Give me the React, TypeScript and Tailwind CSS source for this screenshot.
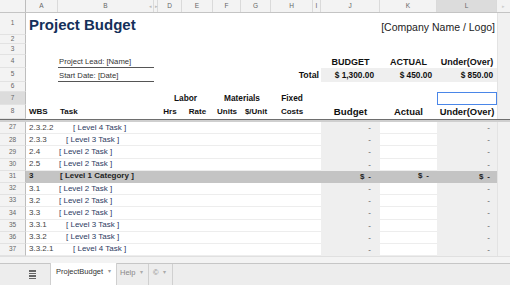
import React from 'react';

const GRID = 'grid grid-cols-[26px_32px_96px_4px_24px_31px_28px_30px_42px_8px_59px_57px_60px_13px]';

function Num({ n, sel }: { n: number; sel?: boolean }) {
  return (
    <div
      className={`flex items-center justify-center border-r border-b border-r-[#bdbdbd] border-b-[#e2e2e2] text-[6.5px] text-[#666] ${
        sel ? 'bg-[#dcdcdc]' : 'bg-[#f3f3f3]'
      }`}
    >
      {n}
    </div>
  );
}

function Strip() {
  return <div className="bg-[#f1f1f1] border-l border-[#e3e3e3]" />;
}

const dataRows = [
  { n: 27, wbs: '2.3.2.2', task: '[ Level 4 Task ]', lvl: 4 },
  { n: 28, wbs: '2.3.3', task: '[ Level 3 Task ]', lvl: 3 },
  { n: 29, wbs: '2.4', task: '[ Level 2 Task ]', lvl: 2 },
  { n: 30, wbs: '2.5', task: '[ Level 2 Task ]', lvl: 2 },
  { n: 31, wbs: '3', task: '[ Level 1 Category ]', lvl: 1 },
  { n: 32, wbs: '3.1', task: '[ Level 2 Task ]', lvl: 2 },
  { n: 33, wbs: '3.2', task: '[ Level 2 Task ]', lvl: 2 },
  { n: 34, wbs: '3.3', task: '[ Level 2 Task ]', lvl: 2 },
  { n: 35, wbs: '3.3.1', task: '[ Level 3 Task ]', lvl: 3 },
  { n: 36, wbs: '3.3.2', task: '[ Level 3 Task ]', lvl: 3 },
  { n: 37, wbs: '3.3.2.1', task: '[ Level 4 Task ]', lvl: 4 },
];

const indent: Record<number, string> = {
  1: 'pl-[2px]',
  2: 'pl-[1px]',
  3: 'pl-[8px]',
  4: 'pl-[15px]',
};

export default function App() {
  const letters = ['A', 'B', '', 'D', 'E', 'F', 'G', 'H', 'I', 'J', 'K', 'L'];

  return (
    <div className="w-[510px] h-[285px] overflow-hidden bg-white font-['Liberation_Sans',Arial,sans-serif] text-[8px] text-[#333] leading-none">
      {/* Column letters */}
      <div className={`${GRID} h-[13px] bg-[#f3f3f3] border-b border-[#c4c4c4] text-[6.5px] text-[#666]`}>
        <div className="border-r border-[#bdbdbd]" />
        {letters.map((l, i) => (
          <div
            key={i}
            className={`relative flex items-center justify-center border-r border-[#dadada] ${
              l === 'L' ? 'bg-[#dcdcdc]' : ''
            }`}
          >
            {l}
            {l === 'B' && <span className="absolute right-[1px] text-[5px] text-[#bbb]">◂</span>}
            {l === 'D' && <span className="absolute left-[-3px] text-[5px] text-[#bbb]">▸</span>}
          </div>
        ))}
        <div className="flex items-center justify-center text-[5px] text-[#ccc]">▸</div>
      </div>

      {/* Row 1 */}
      <div className={`${GRID} h-[22px]`}>
        <Num n={1} />
        <div className="col-span-9 flex items-center pl-[3px] text-[15px] font-bold text-[#15305a] whitespace-nowrap">
          Project Budget
        </div>
        <div className="col-span-3 flex items-end justify-end pr-[2px] pb-[3px] text-[10.5px] text-[#222] whitespace-nowrap">
          [Company Name / Logo]
        </div>
        <Strip />
      </div>

      {/* Row 2, 3 */}
      <div className={`${GRID} h-[9px]`}>
        <Num n={2} />
        <div className="col-span-12" />
        <Strip />
      </div>
      <div className={`${GRID} h-[11px]`}>
        <Num n={3} />
        <div className="col-span-12" />
        <Strip />
      </div>

      {/* Row 4 */}
      <div className={`${GRID} h-[13px]`}>
        <Num n={4} />
        <div />
        <div className="flex items-end pl-[1px] pb-[1px] border-b border-[#555] whitespace-nowrap text-[7.7px]">
          Project Lead: [Name]
        </div>
        <div className="col-span-7" />
        <div className="flex items-end justify-center pb-[1px] text-[9px] font-bold text-[#111]">BUDGET</div>
        <div className="flex items-end justify-center pb-[1px] text-[9px] font-bold text-[#111]">ACTUAL</div>
        <div className="flex items-end justify-center pb-[1px] text-[9px] font-bold text-[#111] whitespace-nowrap">
          Under(Over)
        </div>
        <Strip />
      </div>

      {/* Row 5 */}
      <div className={`${GRID} h-[14px]`}>
        <Num n={5} />
        <div />
        <div className="flex items-end pl-[1px] pb-[1px] border-b border-[#555] whitespace-nowrap text-[7.7px]">
          Start Date: [Date]
        </div>
        <div className="col-span-5" />
        <div className="col-span-2 flex items-center justify-end pr-[2px] text-[8.8px] font-bold text-[#111]">Total</div>
        <div className="flex items-center justify-end pr-[6px] bg-[#efefef] text-[8.3px] font-bold text-[#111] whitespace-nowrap">
          $ 1,300.00
        </div>
        <div className="flex items-center justify-end pr-[5px] bg-[#efefef] text-[8.3px] font-bold text-[#111] whitespace-nowrap">
          $ 450.00
        </div>
        <div className="flex items-center justify-end pr-[4px] bg-[#efefef] text-[8.3px] font-bold text-[#111] whitespace-nowrap">
          $ 850.00
        </div>
        <Strip />
      </div>

      {/* Row 6 */}
      <div className={`${GRID} h-[10px]`}>
        <Num n={6} />
        <div className="col-span-12" />
        <Strip />
      </div>

      {/* Row 7 */}
      <div className={`${GRID} h-[13px]`}>
        <Num n={7} sel />
        <div className="col-span-3" />
        <div className="col-span-2 flex items-center justify-center font-bold text-[8.3px] text-[#111]">Labor</div>
        <div className="col-span-2 flex items-center justify-center font-bold text-[8.3px] text-[#111]">Materials</div>
        <div className="flex items-center justify-center font-bold text-[8.3px] text-[#111]">Fixed</div>
        <div className="col-span-3" />
        <div className="border border-[#4a86e8]" />
        <Strip />
      </div>

      {/* Row 8 */}
      <div className={`${GRID} h-[14px] text-[#111]`}>
        <Num n={8} />
        <div className="flex items-center pl-[3px] font-bold">WBS</div>
        <div className="flex items-center pl-[2px] font-bold">Task</div>
        <div />
        <div className="flex items-center justify-center font-bold">Hrs</div>
        <div className="flex items-center justify-center font-bold">Rate</div>
        <div className="flex items-center justify-center font-bold">Units</div>
        <div className="flex items-center justify-center font-bold whitespace-nowrap">$/Unit</div>
        <div className="flex items-center justify-center font-bold">Costs</div>
        <div />
        <div className="flex items-center justify-center font-bold text-[9.7px]">Budget</div>
        <div className="flex items-center justify-center font-bold text-[9.5px]">Actual</div>
        <div className="flex items-center justify-center font-bold text-[9.4px] whitespace-nowrap">Under(Over)</div>
        <Strip />
      </div>

      {/* Frozen divider */}
      <div className="h-[3px] border-t border-[#6e6e6e] bg-[#cfcfcf]" />

      {/* Data rows */}
      {dataRows.map((r) => {
        const cat = r.lvl === 1;
        return (
          <div key={r.n} className={`${GRID} h-[12.2px]`}>
            <Num n={r.n} />
            <div
              className={`flex items-center pl-[3px] border-b ${
                cat ? 'bg-[#c4c4c4] border-[#c4c4c4] font-bold text-[#222]' : 'border-[#ededed] text-[#444]'
              }`}
            >
              {r.wbs}
            </div>
            <div
              className={`flex items-center whitespace-nowrap border-b ${indent[r.lvl]} ${
                cat ? 'bg-[#c4c4c4] border-[#c4c4c4] font-bold text-[#222]' : 'border-[#ededed] text-[#2c3b62]'
              }`}
            >
              {r.task}
            </div>
            <div className={`col-span-7 border-b ${cat ? 'bg-[#c4c4c4] border-[#c4c4c4]' : 'border-[#ededed]'}`} />
            <div
              className={`flex items-center justify-end ${
                cat ? 'bg-[#c4c4c4] pr-[9px] font-bold text-[#222]' : 'bg-[#efefef] pr-[9px] text-[#555]'
              }`}
            >
              {cat ? (
                <>
                  <span>$</span>
                  <span className="ml-[4px]">-</span>
                </>
              ) : (
                '-'
              )}
            </div>
            <div
              className={`flex items-center justify-end border-b ${
                cat ? 'bg-[#c4c4c4] border-[#c4c4c4] pr-[8px] font-bold text-[#222]' : 'border-[#ededed]'
              }`}
            >
              {cat && (
                <>
                  <span>$</span>
                  <span className="ml-[4px]">-</span>
                </>
              )}
            </div>
            <div
              className={`flex items-center justify-end ${
                cat ? 'bg-[#c4c4c4] pr-[7px] font-bold text-[#222]' : 'bg-[#efefef] pr-[7px] text-[#555]'
              }`}
            >
              {cat ? (
                <>
                  <span>$</span>
                  <span className="ml-[4px]">-</span>
                </>
              ) : (
                '-'
              )}
            </div>
            <Strip />
          </div>
        );
      })}

      {/* Horizontal scroll area */}
      <div className="h-[7px] bg-[#f3f3f3] border-t border-[#e0e0e0]" />

      {/* Sheet tabs */}
      <div className="h-[22px] flex items-stretch bg-[#ededed] border-t border-[#c6c6c6] text-[7.5px]">
        <div className="w-[50px] flex items-start pt-[6px] pl-[29px]">
          <div className="flex flex-col gap-[1px]">
            <div className="w-[7px] h-[1.5px] bg-[#666]" />
            <div className="w-[7px] h-[1.5px] bg-[#666]" />
            <div className="w-[7px] h-[1.5px] bg-[#666]" />
            <div className="w-[7px] h-[1.5px] bg-[#666]" />
          </div>
        </div>
        <div className="w-[67px] -mt-[1px] bg-white border-x border-[#cfcfcf] flex items-start pt-[5px] pl-[5px] text-[#333]">
          ProjectBudget
          <span className="ml-[5px] text-[6px] text-[#999]">▾</span>
        </div>
        <div className="w-[32px] border-r border-[#d0d0d0] flex items-start pt-[5px] pl-[3px] text-[#888]">
          Help
          <span className="ml-[5px] text-[6px] text-[#aaa]">▾</span>
        </div>
        <div className="w-[24px] border-r border-[#d0d0d0] flex items-start pt-[5px] pl-[4px] text-[#888]">
          ©
          <span className="ml-[4px] text-[6px] text-[#aaa]">▾</span>
        </div>
      </div>
    </div>
  );
}
